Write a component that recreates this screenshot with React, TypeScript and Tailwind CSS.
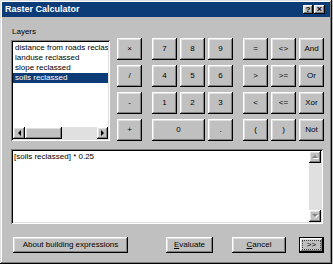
import React from "react";

const raised =
  "bg-[#c0c0c0] shadow-[inset_-1px_-1px_#000,inset_1px_1px_#fff,inset_-2px_-2px_#808080,inset_2px_2px_#dfdfdf]";
const sunken =
  "bg-white shadow-[inset_1px_1px_#808080,inset_-1px_-1px_#fff,inset_2px_2px_#000,inset_-2px_-2px_#dfdfdf]";

const layers = [
  "distance from roads reclass",
  "landuse reclassed",
  "slope reclassed",
  "soils reclassed",
];

const Arrow = ({ dir, disabled }: { dir: "l" | "r" | "u" | "d"; disabled?: boolean }) => {
  const pts = {
    l: "4,0 4,6 1,3",
    r: "1,0 1,6 4,3",
    u: "0,4 6,4 3,1",
    d: "0,1 6,1 3,4",
  }[dir];
  const horiz = dir === "l" || dir === "r";
  return (
    <svg width={horiz ? 5 : 7} height={horiz ? 7 : 6} viewBox={horiz ? "0 0 5 7" : "0 0 7 6"}>
      {disabled && <polygon points={pts} fill="#fff" transform="translate(1,1)" />}
      <polygon points={pts} fill={disabled ? "#808080" : "#000"} />
    </svg>
  );
};

const CalcButton = ({ label, wide }: { label: string; wide?: boolean }) => (
  <div
    className={`${raised} h-[22px] flex items-center justify-center text-[8px] text-black ${
      wide ? "col-span-2" : ""
    }`}
  >
    {label}
  </div>
);

const Group = ({ cols, rows }: { cols: number; rows: { label: string; wide?: boolean }[] }) => (
  <div
    className={`grid gap-x-[3px] gap-y-[5px] ${
      cols === 1 ? "grid-cols-[25px]" : "grid-cols-[25px_25px_25px]"
    }`}
  >
    {rows.map((b, i) => (
      <CalcButton key={i} label={b.label} wide={b.wide} />
    ))}
  </div>
);

const opGroup = ["×", "/", "-", "+"].map((label) => ({ label }));
const numGroup = [
  { label: "7" },
  { label: "8" },
  { label: "9" },
  { label: "4" },
  { label: "5" },
  { label: "6" },
  { label: "1" },
  { label: "2" },
  { label: "3" },
  { label: "0", wide: true },
  { label: "." },
];
const cmpGroup = ["=", "<>", "And", ">", ">=", "Or", "<", "<=", "Xor", "(", ")", "Not"].map(
  (label) => ({ label })
);

export default function App() {
  return (
    <div className="w-[333px] h-[264px] bg-[#c0c0c0] font-['Liberation_Sans',Arial,sans-serif]">
      <div className="w-[332px] h-[264px] p-[2px] shadow-[inset_-1px_-1px_#000,inset_1px_1px_#dfdfdf,inset_-2px_-2px_#808080,inset_2px_2px_#fff] flex flex-col">
        {/* title bar */}
        <div className="h-[15px] bg-[#0c3c78] flex items-center pl-[3px] pr-[5px]">
          <span className="text-white font-bold text-[9px] leading-none">Raster Calculator</span>
          <div className="ml-auto flex gap-[1px]">
            <div className={`${raised} w-[10px] h-[9px] flex items-center justify-center text-[8px] font-bold leading-none`}>
              ?
            </div>
            <div className={`${raised} w-[11px] h-[9px] flex items-center justify-center text-[9px] font-bold leading-none`}>
              ×
            </div>
          </div>
        </div>

        <div className="pl-[9px] pr-[6px] pt-[10px] text-[8px] text-black">
          <div className="flex">
            <div className="w-[99px] flex flex-col">
              <div className="h-[13px] leading-[10px] pl-[1px]">Layers</div>
              <div className={`${sunken} h-[101px] p-[2px] flex flex-col`}>
                <div className="flex-1 overflow-hidden pt-[1px]">
                  {layers.map((l, i) => (
                    <div
                      key={l}
                      className={`h-[10px] leading-[10px] pl-[2px] whitespace-nowrap ${
                        i === 3 ? "bg-[#0c3c78] text-white" : ""
                      }`}
                    >
                      {l}
                    </div>
                  ))}
                </div>
                <div className="h-[12px] flex">
                  <div className={`${raised} w-[12px] flex items-center justify-center`}>
                    <Arrow dir="l" />
                  </div>
                  <div className={`${raised} w-[37px]`} />
                  <div className="flex-1 bg-[#e0e0e0]" />
                  <div className={`${raised} w-[11px] flex items-center justify-center`}>
                    <Arrow dir="r" />
                  </div>
                </div>
              </div>
            </div>

            <div className="flex pt-[11px] pl-[7px] gap-[10px]">
              <Group cols={1} rows={opGroup} />
              <Group cols={3} rows={numGroup} />
              <Group cols={3} rows={cmpGroup} />
            </div>
          </div>

          {/* expression box */}
          <div className={`${sunken} mt-[8px] w-[312px] h-[75px] p-[2px] flex`}>
            <div className="flex-1 pl-[1px] pt-[1px] leading-[10px]">[soils reclassed] * 0.25</div>
            <div className="w-[12px] flex flex-col">
              <div className={`${raised} h-[12px] flex items-center justify-center`}>
                <Arrow dir="u" disabled />
              </div>
              <div className="flex-1 bg-[#e0e0e0]" />
              <div className={`${raised} h-[12px] flex items-center justify-center`}>
                <Arrow dir="d" disabled />
              </div>
            </div>
          </div>

          {/* bottom buttons */}
          <div className="mt-[13px] flex h-[16px]">
            <div className={`${raised} ml-[2px] w-[115px] flex items-center justify-center`}>
              About building expressions
            </div>
            <div className={`${raised} ml-[38px] w-[47px] flex items-center justify-center`}>
              <span>
                <span className="underline">E</span>valuate
              </span>
            </div>
            <div className={`${raised} ml-[19px] w-[54px] flex items-center justify-center`}>
              <span>
                <span className="underline">C</span>ancel
              </span>
            </div>
            <div className="ml-[13px] w-[25px] h-[16px] border border-black">
              <div className={`${raised} w-[23px] h-[14px] flex items-center justify-center`}>
                <div className="w-[19px] h-[10px] border border-dotted border-[#404040] flex items-center justify-center text-[8px] leading-[8px]">
                  &gt;&gt;
                </div>
              </div>
            </div>
          </div>
        </div>
      </div>
    </div>
  );
}
